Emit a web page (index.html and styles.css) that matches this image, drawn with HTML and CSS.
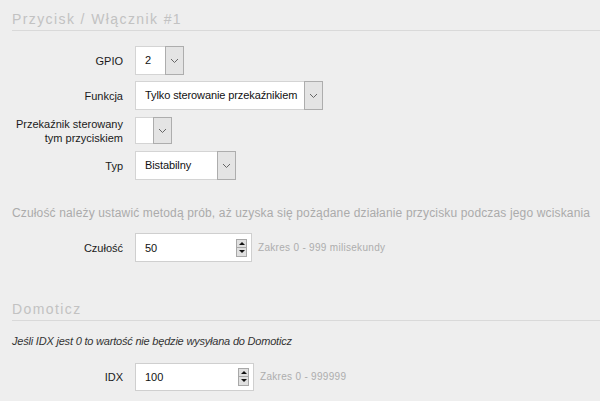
FILE: index.html
```html
<!DOCTYPE html>
<html lang="pl">
<head>
<meta charset="utf-8">
<title>Przycisk</title>
<link rel="stylesheet" href="styles.css">
</head>
<body>
<div class="page">
  <section class="sec">
    <h2 class="sec-title">Przycisk / Włącznik #1</h2>
    <div class="rows">
      <div class="row">
        <label class="lbl">GPIO</label>
        <div class="select w-gpio"><span class="val">2</span><span class="arrow"><svg width="9" height="6" viewBox="0 0 9 6"><path d="M1 1 L4.5 4.5 L8 1" fill="none" stroke="#666" stroke-width="1"/></svg></span></div>
      </div>
      <div class="row">
        <label class="lbl">Funkcja</label>
        <div class="select w-func"><span class="val">Tylko sterowanie przekaźnikiem</span><span class="arrow"><svg width="9" height="6" viewBox="0 0 9 6"><path d="M1 1 L4.5 4.5 L8 1" fill="none" stroke="#666" stroke-width="1"/></svg></span></div>
      </div>
      <div class="row">
        <label class="lbl two">Przekaźnik sterowany<br>tym przyciskiem</label>
        <div class="select w-rel"><span class="val"></span><span class="arrow"><svg width="9" height="6" viewBox="0 0 9 6"><path d="M1 1 L4.5 4.5 L8 1" fill="none" stroke="#666" stroke-width="1"/></svg></span></div>
      </div>
      <div class="row">
        <label class="lbl">Typ</label>
        <div class="select w-typ"><span class="val">Bistabilny</span><span class="arrow"><svg width="9" height="6" viewBox="0 0 9 6"><path d="M1 1 L4.5 4.5 L8 1" fill="none" stroke="#666" stroke-width="1"/></svg></span></div>
      </div>
    </div>
    <p class="desc">Czułość należy ustawić metodą prób, aż uzyska się pożądane działanie przycisku podczas jego wciskania</p>
    <div class="row">
      <label class="lbl">Czułość</label>
      <div class="num w-cz"><span class="val">50</span><span class="spin"><span class="sp up"></span><span class="sp down"></span></span></div>
      <span class="hint">Zakres 0 - 999 milisekundy</span>
    </div>
  </section>
  <section class="sec sec2">
    <h2 class="sec-title">Domoticz</h2>
    <p class="note">Jeśli IDX jest 0 to wartość nie będzie wysyłana do Domoticz</p>
    <div class="row">
      <label class="lbl">IDX</label>
      <div class="num w-idx"><span class="val">100</span><span class="spin"><span class="sp up"></span><span class="sp down"></span></span></div>
      <span class="hint">Zakres 0 - 999999</span>
    </div>
  </section>
</div>
</body>
</html>
```
FILE: styles.css
```css
* { box-sizing: border-box; }
html, body { margin: 0; padding: 0; }
body {
  background: #eeeeee;
  font-family: "Liberation Sans", Arial, sans-serif;
  font-size: 11px;
  color: #222;
  width: 600px;
  height: 401px;
  overflow: hidden;
}
.page { padding: 10px 0 0 12px; }
.sec-title {
  margin: 0;
  font-weight: normal;
  font-size: 14px;
  letter-spacing: 1.4px;
  color: #c2c2c2;
  line-height: 18px;
  padding-bottom: 2px;
  border-bottom: 1px solid #d9d9d9;
}
.rows {
  display: flex;
  flex-direction: column;
  gap: 6px;
  margin-top: 15px;
}
.row {
  display: flex;
  align-items: center;
  height: 29px;
}
.lbl {
  width: 111px;
  text-align: right;
  margin-right: 12px;
  color: #1a1a1a;
  line-height: 14px;
  white-space: nowrap;
}
.select {
  display: flex;
  height: 29px;
  background: #fff;
  border: 1px solid #d4d4d4;
}
.select .val {
  flex: 1;
  padding-left: 9px;
  line-height: 27px;
  white-space: nowrap;
  color: #111;
  letter-spacing: -0.1px;
}
.select .arrow {
  width: 19px;
  margin: -1px -1px -1px 0;
  background: #e4e4e4;
  border: 1px solid #adadad;
  display: flex;
  align-items: center;
  justify-content: center;
}
.w-gpio { width: 49px; }
.w-func { width: 188px; }
.w-rel { width: 37px; height: 27px; }
.w-rel .val { line-height: 25px; }
.w-typ { width: 101px; }
.desc {
  margin: 25px 0 12px 0;
  font-size: 12px;
  letter-spacing: 0.15px;
  color: #ababab;
  line-height: 16px;
  white-space: nowrap;
}
.num {
  display: flex;
  align-items: center;
  height: 29px;
  background: #fff;
  border: 1px solid #cfcfcf;
}
.num .val {
  flex: 1;
  padding-left: 9px;
  color: #111;
}
.spin {
  width: 11px;
  height: 18px;
  margin-right: 4px;
  display: flex;
  flex-direction: column;
  border: 1px solid #a8a8a8;
  background: #e0e0e0;
}
.sp {
  flex: 1;
  display: flex;
  align-items: center;
  justify-content: center;
}
.sp.up { border-bottom: 1px solid #a8a8a8; }
.sp.up::before {
  content: "";
  border-left: 3px solid transparent;
  border-right: 3px solid transparent;
  border-bottom: 3px solid #111;
}
.sp.down::before {
  content: "";
  border-left: 3px solid transparent;
  border-right: 3px solid transparent;
  border-top: 3px solid #111;
}
.w-cz { width: 117px; }
.w-idx { width: 119px; height: 28px; }
.hint {
  margin-left: 6px;
  font-size: 10px;
  letter-spacing: 0.3px;
  color: #adadad;
}
.sec2 { margin-top: 38px; }
.note {
  margin: 13px 0 14px 0;
  font-style: italic;
  font-size: 11px;
  letter-spacing: -0.2px;
  color: #333;
  line-height: 14px;
}
```
